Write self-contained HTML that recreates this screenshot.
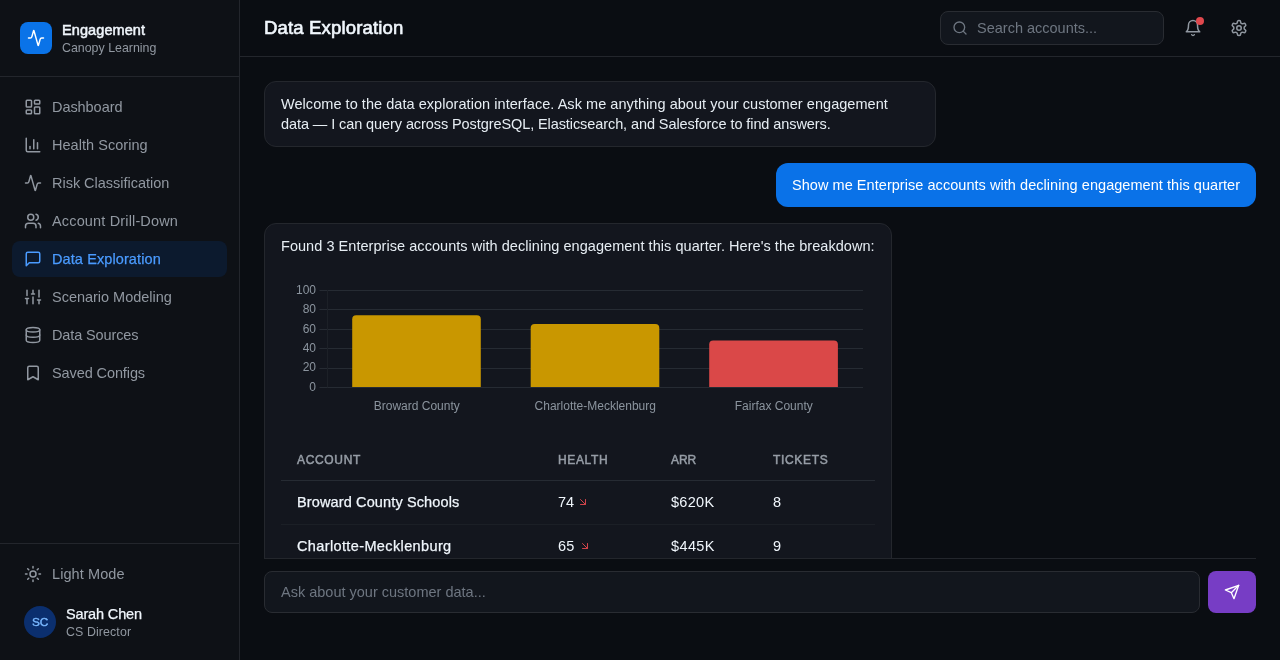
<!DOCTYPE html>
<html lang="en">
<head>
<meta charset="utf-8">
<title>Data Exploration</title>
<style>
*{box-sizing:border-box;margin:0;padding:0}
html,body{width:1280px;height:660px;overflow:hidden;background:#0a0d12;color:#e6edf3;font-family:"Liberation Sans",sans-serif;font-size:14px;-webkit-font-smoothing:antialiased}
svg{display:block;fill:none;stroke:currentColor;stroke-width:2;stroke-linecap:round;stroke-linejoin:round}
.abs{position:absolute}
.t,.nav span,svg{will-change:transform}
.t{position:absolute;white-space:nowrap;line-height:20px}
#side{position:absolute;left:0;top:0;width:240px;height:660px;background:#0e1116;border-right:1px solid #23262c}
#logo{left:20px;top:22px;width:32px;height:32px;border-radius:8px;background:#0a73e8;color:#fff}
#logo svg{position:absolute;left:7px;top:7px;width:18px;height:18px}
.hr{position:absolute;height:1px;background:#23262c}
.nav{position:absolute;left:12px;width:215px;height:36px;border-radius:8px;color:#9198a1}
.nav svg{position:absolute;left:12px;top:9px;width:18px;height:18px}
.nav span{position:absolute;left:40px;top:8px;line-height:20px;font-size:14.5px;white-space:nowrap}
.nav.on{background:#0c1a2e;color:#4a9bff;-webkit-text-stroke:.25px}
#main{position:absolute;left:240px;top:0;width:1040px;height:660px}
.msg{font-size:14.5px;color:#e6edf3}
.th{font-size:12px;-webkit-text-stroke:.5px;color:#969da6}
.sb{-webkit-text-stroke:.5px}
.md{-webkit-text-stroke:.25px}
.td{font-size:14.5px;color:#f0f6fc}
.bub{position:absolute;border:1px solid #24272d;background:#13161e;border-radius:12px}
</style>
</head>
<body>
<div id="side">
  <div id="logo" class="abs"><svg viewBox="0 0 24 24"><path d="M22 12h-2.48a2 2 0 0 0-1.93 1.46l-2.35 8.36a.25.25 0 0 1-.48 0L9.24 2.18a.25.25 0 0 0-.48 0l-2.35 8.36A2 2 0 0 1 4.49 12H2"/></svg></div>
  <div class="t sb" style="left:62px;top:20px;font-size:14.5px;letter-spacing:.09px;color:#f0f6fc">Engagement</div>
  <div class="t" style="left:62px;top:38px;font-size:12.4px;color:#9198a1">Canopy Learning</div>
  <div class="hr" style="left:0;top:76px;width:239px"></div>

  <div class="nav" style="top:89px"><svg viewBox="0 0 24 24"><rect width="7" height="9" x="3" y="3" rx="1"/><rect width="7" height="5" x="14" y="3" rx="1"/><rect width="7" height="9" x="14" y="12" rx="1"/><rect width="7" height="5" x="3" y="16" rx="1"/></svg><span style="letter-spacing:-0.058px">Dashboard</span></div>
  <div class="nav" style="top:127px"><svg viewBox="0 0 24 24"><path d="M3 3v16a2 2 0 0 0 2 2h16"/><path d="M18 17V9"/><path d="M13 17V5"/><path d="M8 17v-3"/></svg><span style="letter-spacing:0.037px">Health Scoring</span></div>
  <div class="nav" style="top:165px"><svg viewBox="0 0 24 24"><path d="M22 12h-2.48a2 2 0 0 0-1.93 1.46l-2.35 8.36a.25.25 0 0 1-.48 0L9.24 2.18a.25.25 0 0 0-.48 0l-2.35 8.36A2 2 0 0 1 4.49 12H2"/></svg><span style="letter-spacing:-0.021px">Risk Classification</span></div>
  <div class="nav" style="top:203px"><svg viewBox="0 0 24 24"><path d="M16 21v-2a4 4 0 0 0-4-4H6a4 4 0 0 0-4 4v2"/><circle cx="9" cy="7" r="4"/><path d="M22 21v-2a4 4 0 0 0-3-3.87"/><path d="M16 3.13a4 4 0 0 1 0 7.75"/></svg><span style="letter-spacing:0.154px">Account Drill-Down</span></div>
  <div class="nav on" style="top:241px"><svg viewBox="0 0 24 24"><path d="M21 15a2 2 0 0 1-2 2H7l-4 4V5a2 2 0 0 1 2-2h14a2 2 0 0 1 2 2z"/></svg><span style="letter-spacing:.1px">Data Exploration</span></div>
  <div class="nav" style="top:279px"><svg viewBox="0 0 24 24"><path d="M4 21v-7M4 10V3M12 21v-9M12 8V3M20 21v-5M20 12V3M2 14h4M10 8h4M18 16h4"/></svg><span style="letter-spacing:-.02px">Scenario Modeling</span></div>
  <div class="nav" style="top:317px"><svg viewBox="0 0 24 24"><ellipse cx="12" cy="5" rx="9" ry="3"/><path d="M3 5V19A9 3 0 0 0 21 19V5"/><path d="M3 12A9 3 0 0 0 21 12"/></svg><span style="letter-spacing:-0.118px">Data Sources</span></div>
  <div class="nav" style="top:355px"><svg viewBox="0 0 24 24"><path d="m19 21-7-4-7 4V5a2 2 0 0 1 2-2h10a2 2 0 0 1 2 2v16z"/></svg><span style="letter-spacing:-.1px">Saved Configs</span></div>

  <div class="hr" style="left:0;top:543px;width:239px"></div>
  <div class="nav" style="top:556px"><svg viewBox="0 0 24 24"><circle cx="12" cy="12" r="4"/><path d="M12 2v2M12 20v2M4.93 4.93l1.41 1.41M17.66 17.66l1.41 1.41M2 12h2M20 12h2M6.34 17.66l-1.41 1.41M19.07 4.93l-1.41 1.41"/></svg><span style="letter-spacing:0.086px">Light Mode</span></div>
  <div class="abs" style="left:24px;top:606px;width:32px;height:32px;border-radius:16px;background:#0b2f6e"></div>
  <div class="t" style="left:24px;top:612px;width:32px;text-align:center;font-size:11.8px;-webkit-text-stroke:.4px;letter-spacing:-.2px;color:#79b8ff">SC</div>
  <div class="t md" style="left:66px;top:604px;font-size:14.5px;letter-spacing:-.15px;color:#f0f6fc">Sarah Chen</div>
  <div class="t" style="left:66px;top:622px;font-size:12.4px;letter-spacing:.1px;color:#9198a1">CS Director</div>
</div>

<div id="main">
  <div class="t" style="left:24px;top:16px;font-size:18.6px;line-height:24px;letter-spacing:.125px;-webkit-text-stroke:.6px;color:#f0f6fc">Data Exploration</div>
  <div class="abs" style="left:700px;top:11px;width:224px;height:34px;border:1px solid #292c32;border-radius:8px;background:#12161d"></div>
  <svg class="abs" style="left:712px;top:20px;width:16px;height:16px;color:#6e7681" viewBox="0 0 24 24"><circle cx="11" cy="11" r="8"/><path d="m21 21-4.3-4.3"/></svg>
  <div class="t" style="left:737px;top:18px;font-size:14.5px;color:#6e7681">Search accounts...</div>
  <svg class="abs" style="left:944px;top:19px;width:18px;height:18px;color:#9198a1" viewBox="0 0 24 24"><path d="M6 8a6 6 0 0 1 12 0c0 7 3 9 3 9H3s3-2 3-9"/><path d="M10.3 21a1.94 1.94 0 0 0 3.4 0"/></svg>
  <div class="abs" style="left:956px;top:17px;width:8px;height:8px;border-radius:4px;background:#e0484d"></div>
  <svg class="abs" style="left:990px;top:19px;width:18px;height:18px;color:#9198a1" viewBox="0 0 24 24"><path d="M12.22 2h-.44a2 2 0 0 0-2 2v.18a2 2 0 0 1-1 1.73l-.43.25a2 2 0 0 1-2 0l-.15-.08a2 2 0 0 0-2.73.73l-.22.38a2 2 0 0 0 .73 2.73l.15.1a2 2 0 0 1 1 1.72v.51a2 2 0 0 1-1 1.74l-.15.09a2 2 0 0 0-.73 2.73l.22.38a2 2 0 0 0 2.73.73l.15-.08a2 2 0 0 1 2 0l.43.25a2 2 0 0 1 1 1.73V20a2 2 0 0 0 2 2h.44a2 2 0 0 0 2-2v-.18a2 2 0 0 1 1-1.73l.43-.25a2 2 0 0 1 2 0l.15.08a2 2 0 0 0 2.73-.73l.22-.39a2 2 0 0 0-.73-2.73l-.15-.08a2 2 0 0 1-1-1.74v-.5a2 2 0 0 1 1-1.74l.15-.09a2 2 0 0 0 .73-2.73l-.22-.38a2 2 0 0 0-2.73-.73l-.15.08a2 2 0 0 1-2 0l-.43-.25a2 2 0 0 1-1-1.73V4a2 2 0 0 0-2-2z"/><circle cx="12" cy="12" r="3"/></svg>
  <div class="hr" style="left:0;top:56px;width:1040px"></div>

  <div id="chat" class="abs" style="left:0;top:57px;width:1040px;height:501px;overflow:hidden">
    <div class="bub" style="left:24px;top:24px;width:672px;height:66px"></div>
    <div class="t msg" style="left:41px;top:37px;letter-spacing:.048px">Welcome to the data exploration interface. Ask me anything about your customer engagement</div>
    <div class="t msg" style="left:41px;top:57px;letter-spacing:-.087px">data — I can query across PostgreSQL, Elasticsearch, and Salesforce to find answers.</div>

    <div class="abs" style="left:536px;top:106px;width:480px;height:44px;border-radius:12px;background:#0a72e8"></div>
    <div class="t msg" style="left:552px;top:118px;letter-spacing:.048px;color:#fff">Show me Enterprise accounts with declining engagement this quarter</div>

    <div class="bub" style="left:24px;top:166px;width:628px;height:420px"></div>
    <div class="t msg" style="left:41px;top:179px;letter-spacing:.046px">Found 3 Enterprise accounts with declining engagement this quarter. Here's the breakdown:</div>
    <svg class="abs" style="left:41px;top:213px;width:594px;height:160px;stroke:none" viewBox="281 270 594 160">
      <g stroke="#262b33" stroke-width="1" fill="none" stroke-linecap="butt"><path d="M319.5 290.5H863"/><path d="M319.5 309.5H863"/><path d="M319.5 329.5H863"/><path d="M319.5 348.5H863"/><path d="M319.5 368.5H863"/><path d="M319.5 387.5H863"/><path d="M327.5 290V387.5" stroke="#1c2027"/></g>
      <path fill="#c99700" d="M352.2 387V319.3a4 4 0 0 1 4-4H476.8a4 4 0 0 1 4 4V387Z"/>
      <path fill="#c99700" d="M530.7 387V328.0a4 4 0 0 1 4-4H655.3a4 4 0 0 1 4 4V387Z"/>
      <path fill="#da4848" d="M709.2 387V344.6a4 4 0 0 1 4-4H833.9a4 4 0 0 1 4 4V387Z"/>
      <g fill="#8b949e" font-family="Liberation Sans, sans-serif" font-size="12"><text x="316" y="293.8" text-anchor="end">100</text><text x="316" y="313.2" text-anchor="end">80</text><text x="316" y="332.6" text-anchor="end">60</text><text x="316" y="352.0" text-anchor="end">40</text><text x="316" y="371.4" text-anchor="end">20</text><text x="316" y="390.9" text-anchor="end">0</text>
        <text x="416.75" y="410" text-anchor="middle">Broward County</text>
        <text x="595.25" y="410" text-anchor="middle">Charlotte-Mecklenburg</text>
        <text x="773.75" y="410" text-anchor="middle">Fairfax County</text>
      </g>
    </svg>
    <div class="t th" style="left:57px;top:393px;letter-spacing:.67px">ACCOUNT</div>
    <div class="t th" style="left:318px;top:393px;letter-spacing:.64px">HEALTH</div>
    <div class="t th" style="left:431px;top:393px;letter-spacing:-.05px">ARR</div>
    <div class="t th" style="left:533px;top:393px;letter-spacing:.66px">TICKETS</div>
    <div class="hr" style="left:41px;top:423px;width:594px;background:#262b33"></div>
    <div class="t td md" style="left:57px;top:435px;letter-spacing:.13px">Broward County Schools</div>
    <div class="t td" style="left:318px;top:435px;letter-spacing:-.1px">74</div>
    <svg class="abs" style="left:337px;top:439px;width:12px;height:12px;color:#d0444a" viewBox="0 0 24 24"><path d="m7 7 10 10"/><path d="M17 7v10H7"/></svg>
    <div class="t td" style="left:431px;top:435px;letter-spacing:.28px">$620K</div>
    <div class="t td" style="left:533px;top:435px">8</div>
    <div class="hr" style="left:41px;top:467px;width:594px;background:#1b1f26"></div>
    <div class="t td md" style="left:57px;top:479px;letter-spacing:.375px">Charlotte-Mecklenburg</div>
    <div class="t td" style="left:318px;top:479px;letter-spacing:.3px">65</div>
    <svg class="abs" style="left:339px;top:483px;width:12px;height:12px;color:#d0444a" viewBox="0 0 24 24"><path d="m7 7 10 10"/><path d="M17 7v10H7"/></svg>
    <div class="t td" style="left:431px;top:479px;letter-spacing:.39px">$445K</div>
    <div class="t td" style="left:533px;top:479px">9</div>
  </div>

  <div class="hr" style="left:24px;top:558px;width:992px"></div>
  <div class="abs" style="left:24px;top:571px;width:936px;height:42px;border:1px solid #292c32;border-radius:8px;background:#12161d"></div>
  <div class="t" style="left:41px;top:582px;font-size:14.5px;color:#6e7681">Ask about your customer data...</div>
  <div class="abs" style="left:968px;top:571px;width:48px;height:42px;border-radius:8px;background:#773dc5;color:#fff"><svg class="abs" style="left:16px;top:13px;width:16px;height:16px" viewBox="0 0 24 24"><path d="m22 2-7 20-4-9-9-4Z"/><path d="M22 2 11 13"/></svg></div>
</div>
</body>
</html>
